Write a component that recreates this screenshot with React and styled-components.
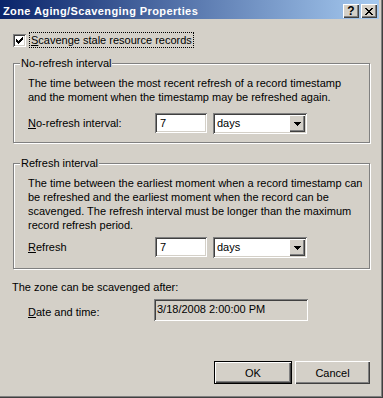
import React from 'react';
import styled, { createGlobalStyle } from 'styled-components';

const Global = createGlobalStyle`
  html, body { margin: 0; padding: 0; background: #d4d0c8; }
  body {
    font-family: "Liberation Sans", Arial, sans-serif;
    font-size: 11px;
    color: #000;
  }
  * { box-sizing: border-box; }
`;

const sunken = `
  box-shadow: inset 1px 1px 0 #808080, inset -1px -1px 0 #ffffff,
    inset 2px 2px 0 #404040, inset -2px -2px 0 #d4d0c8;
`;
const raised = `
  box-shadow: inset 1px 1px 0 #ffffff, inset -1px -1px 0 #404040,
    inset -2px -2px 0 #808080;
`;

const Frame = styled.div`
  width: 383px;
  height: 398px;
  background: #d4d0c8;
  padding: 0 4px 4px 0;
  box-shadow: inset -1px -1px 0 #404040, inset -2px -2px 0 #808080;
  display: flex;
  flex-direction: column;
`;

const TitleBar = styled.div`
  height: 19px;
  flex: none;
  display: flex;
  align-items: flex-start;
  padding: 4px 2px 0 3px;
  background: linear-gradient(to right, #0a246a, #a6caf0);
`;

const Title = styled.div`
  flex: 1;
  color: #fff;
  font-weight: bold;
  font-size: 11px;
  letter-spacing: 0.4px;
  line-height: 13px;
  padding-top: 1px;
  white-space: nowrap;
`;

const CaptionButton = styled.div`
  width: 16px;
  height: 14px;
  margin-left: ${p => p.$gap || 0}px;
  background: #d4d0c8;
  ${raised}
  display: flex;
  align-items: center;
  justify-content: center;
  font-weight: bold;
  font-size: 12px;
  line-height: 14px;
  color: #000;
`;

const Body = styled.div`
  flex: 1;
  display: flex;
  flex-direction: column;
`;

const CheckRow = styled.div`
  display: flex;
  align-items: center;
  height: 16px;
  margin: 13px 0 0 13px;
`;

const CheckBox = styled.span`
  width: 13px;
  height: 13px;
  flex: none;
  background: #fff;
  ${sunken}
  display: flex;
  align-items: center;
  justify-content: center;
`;

const FocusLabel = styled.span`
  margin-left: 3px;
  height: 16px;
  border: 1px dotted #000;
  padding: 0 1px;
  line-height: 14px;
  white-space: nowrap;
`;

const Group = styled.fieldset`
  margin: ${p => p.$top}px 0 0 13px;
  width: 357px;
  padding: 0;
  border: 1px solid #808080;
  box-shadow: 1px 1px 0 #fff, inset 1px 1px 0 #fff;
  min-inline-size: 0;
`;

const Legend = styled.legend`
  margin-left: 6px;
  padding: 0 1px;
  line-height: 13px;
  background: #d4d0c8;
`;

const GroupInner = styled.div`
  padding: ${p => p.$top}px 0 ${p => p.$bottom}px 14px;
`;

const Para = styled.div`
  line-height: 14px;
  white-space: nowrap;
`;

const FieldRow = styled.div`
  display: flex;
  align-items: flex-start;
  margin-top: ${p => p.$top}px;
`;

const RowLabel = styled.div`
  width: 127px;
  line-height: 20px;
  white-space: nowrap;
`;

const TextBox = styled.div`
  width: 52px;
  height: 20px;
  background: #fff;
  ${sunken}
  padding-left: 5px;
  line-height: 20px;
`;

const Combo = styled.div`
  width: 94px;
  height: 21px;
  margin-left: 6px;
  background: #fff;
  ${sunken}
  padding: 2px;
  display: flex;
`;

const ComboText = styled.div`
  flex: 1;
  padding-left: 2px;
  line-height: 17px;
`;

const DropButton = styled.div`
  width: 16px;
  height: 17px;
  background: #d4d0c8;
  ${raised}
  display: flex;
  align-items: center;
  justify-content: center;
`;

const PlainText = styled.div`
  margin: ${p => p.$top}px 0 0 12px;
  line-height: 14px;
`;

const DateRow = styled.div`
  display: flex;
  align-items: flex-start;
  margin: 5px 0 0 28px;
`;

const DateLabel = styled.div`
  width: 126px;
  padding-top: 6px;
  line-height: 14px;
`;

const ReadOnlyBox = styled.div`
  width: 154px;
  height: 22px;
  background: #d4d0c8;
  ${sunken}
  padding: 2px 3px 0 3px;
  line-height: 16px;
  white-space: nowrap;
`;

const Footer = styled.div`
  margin-top: auto;
  margin-bottom: 10px;
  padding-right: 9px;
  display: flex;
  justify-content: flex-end;
`;

const Button = styled.div`
  width: ${p => p.$w}px;
  height: 23px;
  margin-left: ${p => p.$gap || 0}px;
  background: #d4d0c8;
  border: ${p => (p.$default ? '1px solid #000' : 'none')};
  ${raised}
  display: flex;
  align-items: center;
  justify-content: center;
  line-height: 14px;
`;

const Pix = styled.svg`
  display: block;
  shape-rendering: crispEdges;
`;

const CheckMark = () => (
  <Pix width="7" height="7" viewBox="0 0 7 7">
    <path
      fill="#000"
      d="M6 0h1v1h-1z M5 1h2v1h-2z M0 2h1v1h-1z M4 2h3v1h-3z M0 3h2v1h-2z M3 3h3v1h-3z M0 4h5v1h-5z M1 5h3v1h-3z M2 6h1v1h-1z"
    />
  </Pix>
);

const CloseGlyph = () => (
  <Pix width="8" height="7" viewBox="0 0 8 7">
    <path
      fill="#000"
      d="M0 0h2v1h-2z M6 0h2v1h-2z M1 1h2v1h-2z M5 1h2v1h-2z M2 2h4v1h-4z M3 3h2v1h-2z M2 4h4v1h-4z M1 5h2v1h-2z M5 5h2v1h-2z M0 6h2v1h-2z M6 6h2v1h-2z"
    />
  </Pix>
);

const DownArrow = () => (
  <Pix width="7" height="4" viewBox="0 0 7 4">
    <path fill="#000" d="M0 0h7v1h-7z M1 1h5v1h-5z M2 2h3v1h-3z M3 3h1v1h-1z" />
  </Pix>
);

const IntervalRow = ({ label, top }) => (
  <FieldRow $top={top}>
    <RowLabel>{label}</RowLabel>
    <TextBox>7</TextBox>
    <Combo>
      <ComboText>days</ComboText>
      <DropButton>
        <DownArrow />
      </DropButton>
    </Combo>
  </FieldRow>
);

export default function App() {
  return (
    <>
      <Global />
      <Frame>
        <TitleBar>
          <Title>Zone Aging/Scavenging Properties</Title>
          <CaptionButton>?</CaptionButton>
          <CaptionButton $gap={2}>
            <CloseGlyph />
          </CaptionButton>
        </TitleBar>
        <Body>
          <CheckRow>
            <CheckBox>
              <CheckMark />
            </CheckBox>
            <FocusLabel>
              <u>S</u>cavenge stale resource records
            </FocusLabel>
          </CheckRow>

          <Group $top={9}>
            <Legend>No-refresh interval</Legend>
            <GroupInner $top={6} $bottom={8}>
              <Para>
                The time between the most recent refresh of a record timestamp
                <br />
                and the moment when the timestamp may be refreshed again.
              </Para>
              <IntervalRow
                top={9}
                label={
                  <>
                    <u>N</u>o-refresh interval:
                  </>
                }
              />
            </GroupInner>
          </Group>

          <Group $top={14}>
            <Legend>Refresh interval</Legend>
            <GroupInner $top={6} $bottom={10}>
              <Para>
                The time between the earliest moment when a record timestamp can
                <br />
                be refreshed and the earliest moment when the record can be
                <br />
                scavenged. The refresh interval must be longer than the maximum
                <br />
                record refresh period.
              </Para>
              <IntervalRow
                top={5}
                label={
                  <>
                    <u>R</u>efresh
                  </>
                }
              />
            </GroupInner>
          </Group>

          <PlainText $top={11}>The zone can be scavenged after:</PlainText>
          <DateRow>
            <DateLabel>
              <u>D</u>ate and time:
            </DateLabel>
            <ReadOnlyBox>3/18/2008 2:00:00 PM</ReadOnlyBox>
          </DateRow>

          <Footer>
            <Button $w={78} $default>OK</Button>
            <Button $w={75} $gap={3}>Cancel</Button>
          </Footer>
        </Body>
      </Frame>
    </>
  );
}
